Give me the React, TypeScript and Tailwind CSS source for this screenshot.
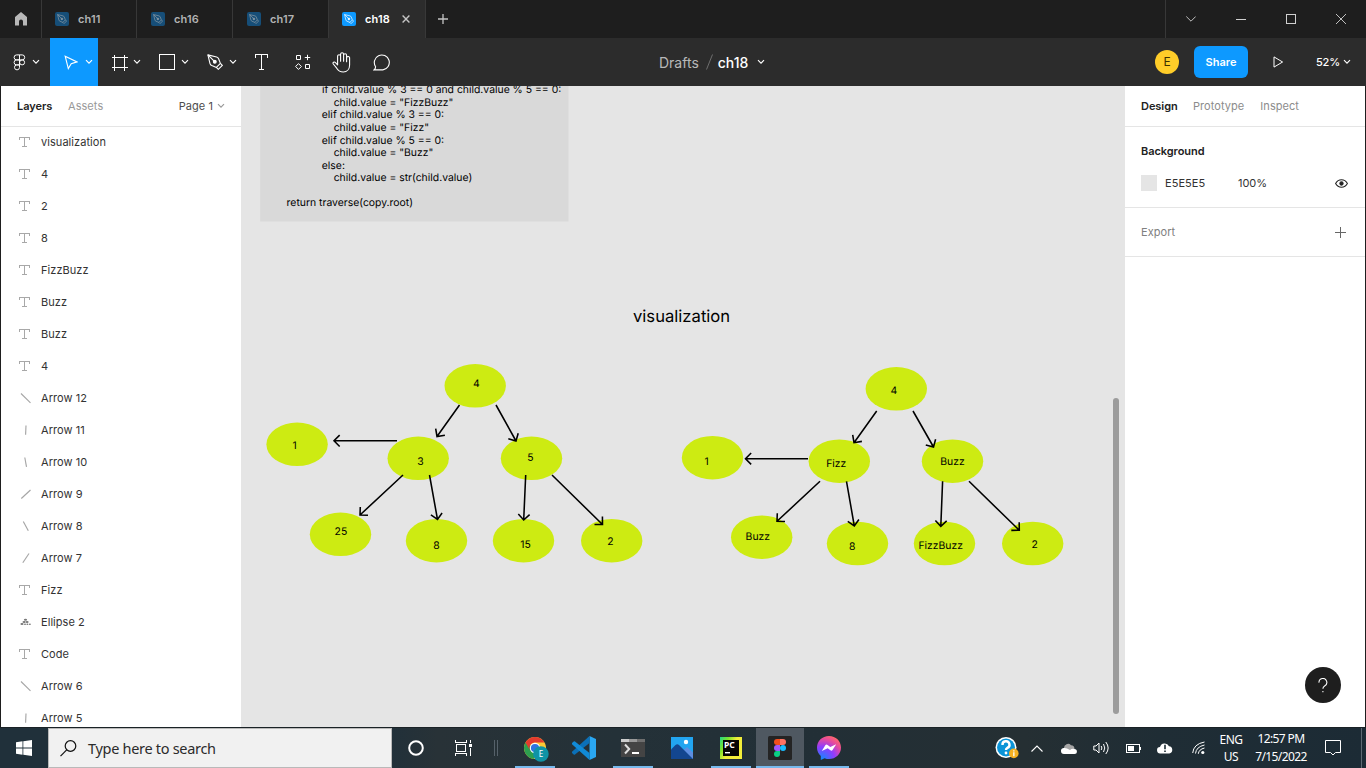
import React from "react";

type Pt = [number, number];

const Chevron = ({ className = "" }: { className?: string }) => (
  <svg className={className} width="8" height="6" viewBox="0 0 8 6" fill="none" stroke="currentColor" strokeWidth="1.15">
    <path d="M1 1.2 4 4.2 7 1.2" />
  </svg>
);

const Nib = ({ size }: { size: number }) => (
  <svg width={size} height={size} viewBox="0 0 16 16" fill="none" stroke="currentColor" strokeWidth="1.1">
    <path d="M.9.9 9.6 3Q11 3.4 11.6 4.8L13.4 9.4 9.4 13.4 4.8 11.6Q3.4 11 3 9.6Z" strokeLinejoin="round" />
    <path d="M.9.9 6.9 6.9" />
    <circle cx="7.8" cy="7.8" r="1.4" fill="currentColor" />
    <path d="M13.4 9.4 15.3 11.3 11.3 15.3 9.4 13.4" />
  </svg>
);

const TabIcon = ({ active }: { active?: boolean }) => (
  <span
    className={
      active
        ? "flex h-[14px] w-[14px] items-center justify-center rounded-[2px] bg-[#0d99ff] text-white"
        : "flex h-[14px] w-[14px] items-center justify-center rounded-[2px] bg-[#164e78] text-[#8c9aa5]"
    }
  >
    <Nib size={10} />
  </span>
);

const Tab = ({ name }: { name: string }) => (
  <div className="flex h-full w-24 items-center border-r border-[#383838] pl-[14px]">
    <TabIcon />
    <span className="ml-[9px] text-[11px] font-semibold tracking-[0.15px] text-[#b3b3b3]">{name}</span>
  </div>
);

const TitleBar = () => (
  <div className="flex h-[38px] w-full bg-[#1e1e1e]">
    <div className="flex w-[42px] items-center justify-center border-r border-[#383838]">
      <svg width="12" height="14" viewBox="0 0 12 14" fill="#b8b8b8">
        <path d="M6 0 12 5V13.5H8V9.5a2 2 0 0 0-4 0v4H0V5Z" />
      </svg>
    </div>
    <div className="-ml-px flex">
      <Tab name="ch11" />
      <Tab name="ch16" />
      <Tab name="ch17" />
    </div>
    <div className="flex w-[96px] items-center bg-[#2c2c2c] pl-[13px]">
      <TabIcon active />
      <span className="ml-[9px] w-[25px] whitespace-nowrap text-[11px] font-semibold tracking-[0.15px] text-white">ch18</span>
      <svg className="ml-[12px]" width="8" height="8" viewBox="0 0 8 8" stroke="#c4c4c4" strokeWidth="1.4">
        <path d="M.6.6 7.4 7.4M7.4.6.6 7.4" />
      </svg>
    </div>
    <div className="flex w-[36px] items-center justify-center border-l border-[#383838] pr-px">
      <svg width="10" height="10" viewBox="0 0 10 10" stroke="#c4c4c4" strokeWidth="1.3">
        <path d="M5 0V10M0 5H10" />
      </svg>
    </div>
    <div className="flex-1" />
    <div className="flex w-[201px] border-l border-[#383838] text-[#c0c0c0]">
      <div className="flex w-[50px] items-center justify-center">
        <svg width="10" height="6" viewBox="0 0 10 6" fill="none" stroke="currentColor">
          <path d="M.3.5 5 5.2 9.7.5" />
        </svg>
      </div>
      <div className="flex w-[50px] items-center justify-center pt-[1px]">
        <div className="h-px w-[10px] bg-[#d0d0d0]" />
      </div>
      <div className="flex w-[50px] items-center justify-center">
        <div className="h-[10px] w-[10px] border border-[#d0d0d0]" />
      </div>
      <div className="flex w-[50px] items-center justify-center">
        <svg width="10" height="10" viewBox="0 0 10 10" stroke="currentColor">
          <path d="M0 0 10 10M10 0 0 10" />
        </svg>
      </div>
    </div>
  </div>
);

const Tool = ({ children, active }: { children: React.ReactNode; active?: boolean }) => (
  <div className={active ? "flex w-12 items-center bg-[#0d99ff]" : "flex w-12 items-center"}>
    <div className="flex w-[34px] items-center justify-center pl-[8px]">{children}</div>
    <Chevron className="ml-[1px]" />
  </div>
);

const Toolbar = () => (
  <div className="relative flex h-12 w-full bg-[#2c2c2c] text-white">
    <div className="flex w-[50px] items-center">
      <svg className="ml-[13px]" width="13" height="17" viewBox="0 0 13 17" fill="none" stroke="currentColor" strokeWidth="1">
        <path d="M6.5.9H3.6a2.5 2.5 0 0 0 0 5H6.5ZM6.5.9H9.2a2.5 2.5 0 0 1 0 5H6.5ZM6.5 5.9H3.6a2.5 2.5 0 0 0 0 5H6.5ZM6.5 10.9H3.6a2.5 2.5 0 1 0 2.9 2.6Z" />
        <circle cx="9.1" cy="8.4" r="2.5" />
      </svg>
      <Chevron className="ml-[6px]" />
    </div>
    <Tool active>
      <svg width="14" height="15" viewBox="0 0 14 15" fill="none" stroke="currentColor" strokeWidth="1.1">
        <path d="M1.2 1.2 13 6.9 7.2 8.6 4.3 13.6Z" />
      </svg>
    </Tool>
    <Tool>
      <svg width="17" height="17" viewBox="0 0 17 17" fill="none" stroke="currentColor" shapeRendering="crispEdges">
        <path d="M3.5.5V16.5M13.5.5V16.5M.5 3.5H16.5M.5 13.5H16.5" />
      </svg>
    </Tool>
    <Tool>
      <div className="h-4 w-4 border border-white" />
    </Tool>
    <Tool>
      <Nib size={16} />
    </Tool>
    <div className="flex w-10 items-center justify-center pr-px">
      <svg width="13" height="16" viewBox="0 0 13 16" fill="none" stroke="currentColor" shapeRendering="crispEdges">
        <path d="M.5 4V.5H12.5V4M6.5 .5V15.5M4 15.5H9" />
      </svg>
    </div>
    <div className="flex w-10 items-center justify-center pl-[2px]">
      <svg width="16" height="16" viewBox="0 0 16 16" fill="none" stroke="currentColor">
        <path d="M1.5 1.5h4v4h-4zM10.5 10.5h4v4h-4zM12.5.8V6.2M9.8 3.5H15.2M3.5 9.6 6.4 12.5 3.5 15.4.6 12.5Z" />
      </svg>
    </div>
    <div className="flex w-10 items-center justify-center">
      <svg width="20" height="21" viewBox="0 0 20 21" fill="none" stroke="currentColor" strokeWidth="1.1" strokeLinejoin="round" strokeLinecap="round">
        <path d="M5.6 12.8V4.2a1.5 1.5 0 0 1 3 0V2.3a1.5 1.5 0 0 1 3 0V3.2a1.5 1.5 0 0 1 3 0V5.6a1.6 1.6 0 0 1 3 0V13c0 4-2.5 7-6.3 7-3.5 0-5.3-1.6-6.6-3.8L1.3 12c-.9-1.4.9-2.8 2.2-1.4l2.1 2.2M8.6 4V9.3M11.6 3V9.3M14.6 5V9.8" />
      </svg>
    </div>
    <div className="flex w-10 items-center justify-center">
      <svg width="19" height="17" viewBox="0 0 19 17" fill="none" stroke="currentColor" strokeWidth="1.1">
        <path d="M1 15.9c1.3-.9 1.6-2 1.6-3.2A7.5 7.5 0 1 1 9.9 15.9Z" />
      </svg>
    </div>
    <div className="absolute left-[659px] top-0 flex h-full items-center text-[14px]">
      <span className="text-[#b8b8b8]">Drafts</span>
      <svg className="ml-[7px]" width="7" height="16" viewBox="0 0 7 16" stroke="#6e6e6e">
        <path d="M6.5.5.5 15.5" />
      </svg>
      <span className="ml-[5px] font-medium">ch18</span>
      <Chevron className="ml-[9px]" />
    </div>
    <div className="flex-1" />
    <div className="flex items-center">
      <div className="flex h-6 w-6 items-center justify-center rounded-full bg-[#ffcd29] text-[12px] text-[#3d3000]">E</div>
      <div className="ml-[15px] flex h-8 w-[54px] items-center justify-center rounded-[6px] bg-[#0d99ff] text-[11px] font-semibold">Share</div>
      <svg className="ml-[25px]" width="11" height="12" viewBox="0 0 11 12" fill="none" stroke="currentColor">
        <path d="M1 .9V11.1L9.6 6Z" />
      </svg>
      <span className="ml-[32px] w-[23px] whitespace-nowrap text-[11px] font-medium tracking-[-0.2px]">52%</span>
      <Chevron className="ml-[4px] mr-[15px]" />
    </div>
  </div>
);

type Layer = { name: string; icon: "text" | "tree" | string };
const layers: Layer[] = [
  { name: "visualization", icon: "text" },
  { name: "4", icon: "text" },
  { name: "2", icon: "text" },
  { name: "8", icon: "text" },
  { name: "FizzBuzz", icon: "text" },
  { name: "Buzz", icon: "text" },
  { name: "Buzz", icon: "text" },
  { name: "4", icon: "text" },
  { name: "Arrow 12", icon: "M2 1.5 11.5 10.8" },
  { name: "Arrow 11", icon: "M7 1.5 6.6 10.8" },
  { name: "Arrow 10", icon: "M5.8 1.5 7.5 10.8" },
  { name: "Arrow 9", icon: "M11.5 2 2.3 10.5" },
  { name: "Arrow 8", icon: "M4.3 1.5 9.3 10.8" },
  { name: "Arrow 7", icon: "M10 1.5 3.8 10.8" },
  { name: "Fizz", icon: "text" },
  { name: "Ellipse 2", icon: "tree" },
  { name: "Code", icon: "text" },
  { name: "Arrow 6", icon: "M2 1.5 11.5 10.8" },
  { name: "Arrow 5", icon: "M7 1.5 6.6 10.8" },
];

const LayerIcon = ({ icon }: { icon: string }) => {
  if (icon === "text")
    return (
      <svg width="12" height="12" viewBox="0 0 12 12" fill="none" stroke="#a8a8a8" shapeRendering="crispEdges">
        <path d="M1.5 3.5V1.5H11.5V3.5M6.5 1.5V10.5M4 10.5H9" transform="translate(-1 0)" />
      </svg>
    );
  if (icon === "tree")
    return (
      <svg width="12" height="12" viewBox="0 0 12 12" fill="#777">
        <ellipse cx="6.5" cy="3.8" rx="1.6" ry="1" />
        <ellipse cx="5.1" cy="6" rx="1.6" ry="1" />
        <ellipse cx="8.1" cy="6" rx="1.5" ry="1" />
        <ellipse cx="3" cy="8" rx="1.6" ry="1" />
        <ellipse cx="6" cy="8.2" rx="1" ry=".8" />
        <ellipse cx="8.4" cy="8.2" rx="1" ry=".8" />
        <ellipse cx="10.9" cy="8.2" rx="1" ry=".8" />
      </svg>
    );
  return (
    <svg width="12" height="12" viewBox="0 0 12 12" fill="none" stroke="#a6a6a6" strokeWidth="1.15">
      <path d={icon} />
    </svg>
  );
};

const LayersPanel = () => (
  <div className="flex w-[241px] shrink-0 flex-col overflow-hidden border-r border-[#e5e5e5] bg-white text-[11px] tracking-[0.055px]">
    <div className="flex h-[41px] shrink-0 items-center border-b border-[#e5e5e5] pl-4 pr-[16px]">
      <span className="w-[36px] whitespace-nowrap font-semibold tracking-[-0.05px] text-[#222]">Layers</span>
      <span className="ml-[15px] text-[#999]">Assets</span>
      <span className="ml-auto text-[#4d4d4d]">Page 1</span>
      <Chevron className="ml-[4px] text-[#999]" />
    </div>
    <div className="-mt-px flex flex-col">
      {layers.map((l, i) => (
        <div key={i} className="flex h-8 shrink-0 items-center pl-[18px]">
          <LayerIcon icon={l.icon} />
          <span className="ml-[10px] text-[#333]">{l.name}</span>
        </div>
      ))}
    </div>
  </div>
);

const nodes: Pt[] = [
  [475.2, 385.8], [297.1, 444.3], [418.2, 458.3], [531.5, 458.3], [340.5, 534.3], [436.5, 540.7], [523.5, 540.7], [611.7, 540.7],
  [896.3, 388.8], [712.5, 457.7], [839.3, 461.2], [952.5, 461.2], [761.7, 537.2], [857.5, 543.5], [944.5, 543.5], [1032.7, 543.5],
];

const arrows: [Pt, Pt][] = [
  [[459.5, 405], [437, 436.5]],
  [[496, 405], [516, 441]],
  [[397, 440.8], [334, 440.8]],
  [[403, 475], [360, 515]],
  [[429.5, 475], [437.5, 519.5]],
  [[525.7, 475], [523.7, 520]],
  [[552, 475], [602.5, 524.5]],
  [[876.7, 411], [854, 442.7]],
  [[913, 411], [933.5, 447]],
  [[808, 458.7], [745.5, 458.7]],
  [[820, 481.3], [777, 521.3]],
  [[846.5, 481.3], [854.3, 526]],
  [[942.6, 481.3], [940.8, 526.3]],
  [[969, 481.3], [1019.3, 530.3]],
];

const labels: [string, number, number][] = [
  ["4", 472.9, 386.8], ["1", 292.4, 449], ["3", 417.3, 465], ["5", 527.2, 461.3], ["25", 334.6, 535.3], ["8", 433.3, 549.4], ["15", 520.3, 547.8], ["2", 607.3, 545.3],
  ["4", 890.4, 394.4], ["1", 704.6, 464.5], ["Fizz", 826.2, 466.7], ["Buzz", 940.3, 464.7], ["Buzz", 745.6, 539.6], ["8", 848.9, 550.4], ["FizzBuzz", 918.4, 549.4], ["2", 1031.4, 547.8],
];

const arrowPath = ([a, b]: [Pt, Pt]) => {
  const t = Math.atan2(a[1] - b[1], a[0] - b[0]);
  const arm = (d: number) => `${b[0] + 8 * Math.cos(t + d)} ${b[1] + 8 * Math.sin(t + d)}`;
  return `M${a[0]} ${a[1]}L${b[0]} ${b[1]}M${arm(Math.PI / 4)}L${b[0]} ${b[1]}L${arm(-Math.PI / 4)}`;
};

const codeLines: [string, number, number][] = [
  ["if child.value % 3 == 0 and child.value % 5 == 0:", 322, 93.2],
  ['child.value = "FizzBuzz"', 333.7, 105.8],
  ["elif child.value % 3 == 0:", 321.8, 118.4],
  ['child.value = "Fizz"', 333.7, 131],
  ["elif child.value % 5 == 0:", 321.8, 143.5],
  ['child.value = "Buzz"', 333.7, 156.1],
  ["else:", 321.8, 168.7],
  ["child.value = str(child.value)", 333.7, 181.3],
  ["return traverse(copy.root)", 286.6, 206.4],
];

const Canvas = () => (
  <div className="relative min-w-0 flex-1 overflow-hidden bg-[#e5e5e5]">
    <svg
      className="absolute left-0 top-0"
      width="883"
      height="641"
      viewBox="242 86 883 641"
      textRendering="geometricPrecision"
      fontSize="10.4"
    >
      <rect x="260.2" y="80" width="308.3" height="141.5" fill="#d9d9d9" />
      {codeLines.map(([s, x, y], i) => (
        <text key={i} x={x} y={y}>{s}</text>
      ))}
      {nodes.map(([x, y], i) => (
        <ellipse key={i} cx={x} cy={y} rx="30.7" ry="21.8" fill="#cdeb12" />
      ))}
      {arrows.map((a, i) => (
        <path key={i} d={arrowPath(a)} fill="none" stroke="#000" strokeWidth="1.56" />
      ))}
      <text x="633" y="322" fontSize="16.64">visualization</text>
      {labels.map(([s, x, y], i) => (
        <text key={i} x={x} y={y}>{s}</text>
      ))}
    </svg>
    <div className="absolute right-[6px] top-[312px] h-[316px] w-[6px] rounded-full bg-[#9c9c9c]" />
  </div>
);

const DesignPanel = () => (
  <div className="flex w-[240px] shrink-0 flex-col bg-white text-[11px] tracking-[0.055px]">
    <div className="flex h-[41px] items-center gap-4 border-b border-[#e5e5e5] pl-4">
      <span className="w-[36px] whitespace-nowrap font-semibold tracking-[-0.05px] text-[#222]">Design</span>
      <span className="text-[#8c8c8c]">Prototype</span>
      <span className="text-[#8c8c8c]">Inspect</span>
    </div>
    <div className="flex h-[81px] flex-col border-b border-[#e5e5e5] pl-4 pt-2">
      <div className="flex h-8 items-center font-semibold tracking-[-0.05px] text-[#222]">Background</div>
      <div className="flex h-8 items-center text-[#333]">
        <div className="h-4 w-4 bg-[#e5e5e5]" />
        <span className="ml-2 w-[73px]">E5E5E5</span>
        <span className="tracking-[-0.05px]">100%</span>
        <svg className="ml-auto mr-[17px]" width="13" height="9" viewBox="0 0 13 9" fill="none" stroke="#222" strokeWidth="1.1">
          <path d="M.6 4.5C2 2 4 .8 6.5.8S11 2 12.4 4.5C11 7 9 8.2 6.5 8.2S2 7 .6 4.5Z" />
          <circle cx="6.5" cy="4.5" r="1.6" fill="#222" />
        </svg>
      </div>
    </div>
    <div className="flex h-[49px] items-center border-b border-[#e5e5e5] pl-4 pr-[19px] text-[#808080]">
      Export
      <svg className="ml-auto" width="11" height="11" viewBox="0 0 11 11" stroke="#666" shapeRendering="crispEdges">
        <path d="M5.5 0V11M0 5.5H11" />
      </svg>
    </div>
    <div className="flex flex-1 items-end justify-end pb-[24px] pr-[24px]">
      <div className="flex h-9 w-9 items-center justify-center rounded-full bg-[#1e1e1e]">
        <svg width="10" height="15" viewBox="0 0 10 15" fill="none" stroke="#fff" strokeWidth="1.1">
          <path d="M1 4.6A3.9 3.9 0 1 1 6.6 7.9C5.4 8.6 4.9 9.2 4.9 10.8" />
          <path d="M4.9 13V14.3" />
        </svg>
      </div>
    </div>
  </div>
);

const App48 = ({ children, open, active }: { children: React.ReactNode; open?: boolean; active?: boolean }) => (
  <div className={active ? "mr-px flex h-full w-12 flex-col items-center bg-[#4f5861]" : "mr-px flex h-full w-12 flex-col items-center"}>
    <div className="flex flex-1 items-center justify-center pt-[2px]">{children}</div>
    <div className={active ? "h-[2px] w-12 bg-[#76b9ed]" : open ? "h-[2px] w-10 bg-[#76b9ed]" : "h-[2px] w-10"} />
  </div>
);

const Cell = ({ children }: { children: React.ReactNode }) => (
  <div className="flex h-full w-8 shrink-0 items-center justify-center">{children}</div>
);

const Taskbar = () => (
  <div className="flex h-10 w-full bg-[linear-gradient(90deg,#20303a_0%,#20303a_28%,#283237_32%,#243138_45%,#222f36_60%,#252f33_75%,#1f2d35_85%,#1c2b35_100%)] font-['Noto_Sans','Open_Sans',sans-serif] text-white">
    <div className="flex w-12 items-center justify-center">
      <svg width="16" height="16" viewBox="0 0 16 16" fill="#fff">
        <path d="M0 2.2 6.5 1.3V7.6H0ZM7.3 1.2 16 0V7.6H7.3ZM0 8.4H6.5V14.7L0 13.8ZM7.3 8.4H16V16L7.3 14.8Z" />
      </svg>
    </div>
    <div className="flex w-[344px] items-center border border-[#b9b9b9] bg-[#f1f1f1] pl-[11px]">
      <svg width="17" height="17" viewBox="0 0 17 17" fill="none" stroke="#111" strokeWidth="1.2">
        <circle cx="10.5" cy="6" r="5.3" />
        <path d="M6.7 9.8.5 16.2" />
      </svg>
      <span className="ml-[11px] whitespace-nowrap pt-[2px] text-[14.5px] tracking-[-0.3px] text-[#2b2b2b]">Type here to search</span>
    </div>
    <div className="flex w-12 items-center justify-center">
      <svg width="16" height="16" viewBox="0 0 16 16" fill="none" stroke="#fff" strokeWidth="2">
        <circle cx="8" cy="8" r="6.8" />
      </svg>
    </div>
    <div className="flex w-12 items-center justify-center pr-px">
      <svg width="17" height="16" viewBox="0 0 17 16" fill="none" stroke="#fff" shapeRendering="crispEdges">
        <path d="M.5 0V2.5H11.5V0M.5 16V13.5H11.5V16M1.5 4.5H10.5V11.5H1.5ZM15.5 0V3M15.5 8V16" />
        <path d="M14 4H17V7H14Z" fill="#fff" stroke="none" />
      </svg>
    </div>
    <div className="flex w-[23px] items-center gap-[2px] pl-[6px]">
      <div className="h-4 w-px bg-[#56616a]" />
      <div className="h-4 w-px bg-[#56616a]" />
    </div>
    <App48 open>
      <svg className="ml-[2px] mt-[2px]" width="26" height="26" viewBox="0 0 26 26">
        <circle cx="12" cy="12" r="11" fill="#fcc934" />
        <path d="M12 12 2.5 6.5A11 11 0 0 0 10.5 22.9L15 16Z" fill="#2d9e4f" />
        <path d="M2.5 6.5A11 11 0 0 1 21.5 6.5H12A5.5 5.5 0 0 0 7 14.5Z" fill="#e33b2e" />
        <circle cx="12" cy="12" r="5.2" fill="#fff" />
        <circle cx="12" cy="12" r="4.1" fill="#2f74e0" />
        <circle cx="17.9" cy="18" r="7.8" fill="#0f93a5" />
        <text x="17.9" y="20.9" textAnchor="middle" fontSize="8" fill="#fff">E</text>
      </svg>
    </App48>
    <App48>
      <svg width="24" height="24" viewBox="0 0 24 24">
        <path d="M17.5 0 24 3V21L17.5 24Z" fill="#2aa7f2" />
        <path d="M0 15.8 17.5 0V7L3 18.6Q2.3 19 1.7 18.5L0 17Q-.6 16.4 0 15.8Z" fill="#0b70b8" />
        <path d="M0 8.2Q-.6 7.6 0 7L1.7 5.5Q2.3 5 3 5.4L17.5 17V24Z" fill="#118ad6" />
      </svg>
    </App48>
    <App48 open>
      <svg width="24" height="18" viewBox="0 0 24 18">
        <path d="M0 0H24V18H0Z" fill="#444" />
        <path d="M0 0H8V3H0Z" fill="#ccc" />
        <path d="M8 0H16V3H8Z" fill="#999" />
        <path d="M16 0H24V3H16Z" fill="#6e6e6e" />
        <path d="M4 5.5 8.2 10 4 14.5" fill="none" stroke="#dedede" strokeWidth="2" />
        <path d="M11 13H18V15H11Z" fill="#fff" />
      </svg>
    </App48>
    <App48>
      <svg width="22" height="22" viewBox="0 0 22 22">
        <path d="M0 0H22V22H0Z" fill="#22a5f0" />
        <path d="M10 15 16 10 22 15.5V22H10Z" fill="#5d8ee0" />
        <path d="M0 12.5 4.5 8Q6.3 6.3 8 8L22 22H0Z" fill="#13468f" />
        <circle cx="15" cy="5" r="2.2" fill="#fff" />
      </svg>
    </App48>
    <App48 open>
      <svg width="22" height="22" viewBox="0 0 22 22">
        <defs>
          <linearGradient id="pc" x1="0" y1="0" x2="1" y2="0.6">
            <stop offset="0" stopColor="#21d789" />
            <stop offset=".3" stopColor="#7be42c" />
            <stop offset=".6" stopColor="#f2ed3a" />
          </linearGradient>
        </defs>
        <path d="M0 0H22V22H0Z" fill="url(#pc)" />
        <path d="M3 3H19V19H3Z" fill="#050505" />
        <text x="4" y="11" fontSize="8.5" fontWeight="700" fill="#fff">PC</text>
        <path d="M5 15H10V16.4H5Z" fill="#fff" />
      </svg>
    </App48>
    <App48 active>
      <svg width="24" height="24" viewBox="0 0 24 24">
        <rect width="24" height="24" rx="1.5" fill="#242424" />
        <path d="M12 3H9a3 3 0 0 0 0 6H12Z" fill="#f24e1e" />
        <path d="M12 3H15a3 3 0 0 1 0 6H12Z" fill="#ff7262" />
        <path d="M12 9H9a3 3 0 0 0 0 6H12Z" fill="#a259ff" />
        <circle cx="15" cy="12" r="3" fill="#1abcfe" />
        <path d="M12 15H9a3 3 0 1 0 3 3Z" fill="#0acf83" />
      </svg>
    </App48>
    <App48 open>
      <svg width="24" height="24" viewBox="0 0 24 24">
        <defs>
          <radialGradient id="ms" cx=".2" cy="1" r="1.1">
            <stop offset="0" stopColor="#0a8dff" />
            <stop offset=".5" stopColor="#8f3cff" />
            <stop offset=".8" stopColor="#e84a9c" />
            <stop offset="1" stopColor="#ff6a68" />
          </radialGradient>
        </defs>
        <path d="M12 0C5.2 0 0 5 0 11.6 0 15.1 1.4 18 3.8 20V24L7.6 22.3C9 22.9 10.5 23.1 12 23.1 18.8 23.1 24 18.2 24 11.6 24 5 18.8 0 12 0Z" fill="url(#ms)" />
        <path d="M4.8 15 8.3 9.3Q9.3 8 10.6 9L13.3 11 19.2 8.2 15.7 13.8Q14.7 15.3 13.4 14.2L10.7 12.2Z" fill="#fff" />
      </svg>
    </App48>
    <div className="flex-1" />
    <div className="flex w-[30px] items-center justify-center">
      <svg className="ml-px" width="24" height="22" viewBox="0 0 24 22">
        <circle cx="11" cy="10.5" r="10.5" fill="#fff" />
        <circle cx="11" cy="10.5" r="9" fill="#0b94d8" />
        <path d="M7.5 8A3.5 3.5 0 1 1 12.2 11Q11 11.7 11 13" fill="none" stroke="#fff" strokeWidth="2.4" />
        <circle cx="11" cy="16" r="1.4" fill="#fff" />
        <circle cx="18.8" cy="16.4" r="4.8" fill="#f6b021" />
        <path d="M18.2 13.2H19.5V14.5H18.2ZM18.2 15.3H19.5V19.3H18.2Z" fill="#fff" />
      </svg>
    </div>
    <Cell>
      <svg width="12" height="7" viewBox="0 0 12 7" fill="none" stroke="#fff" strokeWidth="1.1">
        <path d="M.5 6.5 6 1 11.5 6.5" />
      </svg>
    </Cell>
    <Cell>
      <svg width="16" height="11" viewBox="0 0 16 11">
        <path d="M3 5A4 4 0 0 1 10 2.2 3.8 3.8 0 0 1 13.5 6L8 7.5Z" fill="#a6a6a6" />
        <path d="M0 8A2.8 2.8 0 0 1 3 5Q4.5 4.6 6 5.5L9 7Q11 5 13.4 6A2.5 2.5 0 0 1 13.4 11H3A3 3 0 0 1 0 8Z" fill="#fff" />
      </svg>
    </Cell>
    <Cell>
      <svg width="17" height="14" viewBox="0 0 17 14" fill="none" stroke="#fff">
        <path d="M.8 5H3L6 2V12L3 9H.8ZM8.2 5Q9.6 7 8.2 9M10.5 3Q13 7 10.5 11M12.8 1Q17.5 7 12.8 13" />
      </svg>
    </Cell>
    <Cell>
      <svg className="ml-px" width="16" height="9" viewBox="0 0 16 9" fill="none" stroke="#fff" shapeRendering="crispEdges">
        <path d="M.5.5H13.5V8.5H.5ZM14.5 3V6" />
        <path d="M2 2H8V7H2Z" fill="#fff" stroke="none" />
      </svg>
    </Cell>
    <Cell>
      <svg width="16" height="12" viewBox="0 0 16 12">
        <path d="M3.5 11.5A3.2 3.2 0 0 1 3 5.1 4.8 4.8 0 0 1 12 4.2 3.7 3.7 0 0 1 12.3 11.5Z" fill="#fff" />
        <path d="M7.2 2.8H8.8V7.3H7.2ZM7.2 8.4H8.8V10H7.2Z" fill="#1f2d35" />
      </svg>
    </Cell>
    <div className="flex w-[34px] items-center justify-center">
      <svg width="13" height="14" viewBox="0 0 13 14" fill="none" stroke="#fff">
        <path d="M.7 12Q1.5 3 12.5 1M3.5 12.5Q4.2 5.8 12.5 4M6.3 12.8Q6.8 8.4 12.5 7" />
        <circle cx="10.8" cy="11.5" r="1.6" fill="#fff" stroke="none" />
      </svg>
    </div>
    <div className="flex w-[32px] flex-col items-center pt-[3px] text-[12px] leading-[17px] tracking-[-0.5px]">
      <span>ENG</span>
      <span>US</span>
    </div>
    <div className="flex w-[68px] flex-col items-center whitespace-nowrap pt-[2px] text-[12px] leading-[18px] tracking-[-0.6px]">
      <span>12:57 PM</span>
      <span>7/15/2022</span>
    </div>
    <div className="flex w-[46px] items-center pl-[10px]">
      <svg width="16" height="16" viewBox="0 0 16 16" fill="none" stroke="#fff">
        <path d="M.5.5H15.5V12.5H10.5L8 15 5.5 12.5H.5Z" />
      </svg>
    </div>
    <div className="w-[5px] border-l border-[#5d6a73]" />
  </div>
);

export default function App() {
  return (
    <div className="flex h-[768px] w-[1366px] flex-col overflow-hidden bg-[#1e1e1e] font-[Inter,sans-serif]">
      <TitleBar />
      <Toolbar />
      <div className="flex h-[641px] overflow-hidden border-l border-r border-[#1e1e1e]">
        <LayersPanel />
        <Canvas />
        <DesignPanel />
      </div>
      <div className="h-px shrink-0 bg-[#1a2226]" />
      <Taskbar />
    </div>
  );
}
